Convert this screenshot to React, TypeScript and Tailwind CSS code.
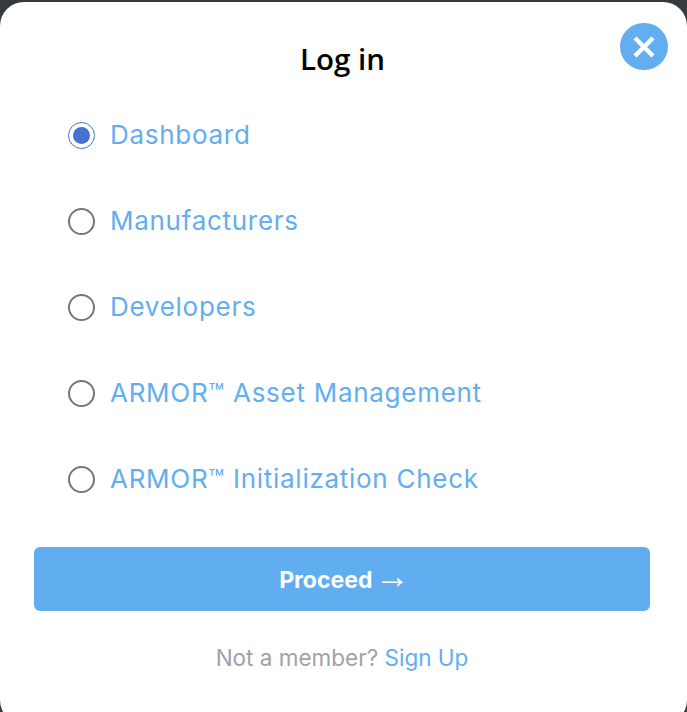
import React from 'react';

const OPTIONS = ['Dashboard', 'Manufacturers', 'Developers', 'ARMOR™ Asset Management', 'ARMOR™ Initialization Check'];

function Radio({ checked }: { checked: boolean }) {
  return (
    <span className={`w-[27px] h-[27px] mt-[2px] shrink-0 rounded-full bg-white flex items-center justify-center ${checked ? 'border-[1.5px] border-[#4473cf]' : 'border-2 border-[#767676]'}`}>
      {checked && <span className="w-[17px] h-[17px] rounded-full bg-[#4473cf]" />}
    </span>
  );
}

export default function App() {
  return (
    <div className="h-[712px] overflow-hidden bg-[#343a40] pt-[2px] font-['Inter',sans-serif]">
      <div className="relative h-[722px] bg-white rounded-[24px] px-[34px]">
        <button className="absolute top-[21px] right-[19px] w-[48px] h-[47px] rounded-full bg-[#63aeef] flex items-center justify-center">
          <svg width="24" height="24" viewBox="0 0 24 24" className="text-white">
            <path d="M3 3 L21 21 M21 3 L3 21" stroke="currentColor" strokeWidth="4.5" fill="none" />
          </svg>
        </button>
        <h1 className="pt-[38px] h-[97px] w-[617px] text-center text-[29.5px] leading-[38px] font-semibold text-black font-['Open_Sans',sans-serif]">Log in</h1>
        <div className="flex flex-col gap-[13px] w-[619px]">
          {OPTIONS.map((label, i) => (
            <label key={label} className="h-[73px] -mt-px mb-px flex items-center gap-[15px] px-[33px] rounded-[10px] border border-[#fdfdfd] text-[26px] tracking-[0.72px] text-[#63aeef]">
              <Radio checked={i === 0} />
              <span>{label}</span>
            </label>
          ))}
        </div>
        <button className="mt-[31px] w-[616px] h-[64px] pl-[5px] pb-[2px] rounded-[6px] bg-[#60aef0] text-white text-[23px] font-bold">
          Proceed <span className="-ml-[3px] text-[35px] leading-none font-['Liberation_Sans',sans-serif] font-normal">→</span>
        </button>
        <p className="mt-[31px] w-[616px] text-center text-[22.5px] leading-[32px] text-[#a1a1aa]">
          Not a member? <a className="text-[#63aeef]">Sign Up</a>
        </p>
      </div>
    </div>
  );
}
